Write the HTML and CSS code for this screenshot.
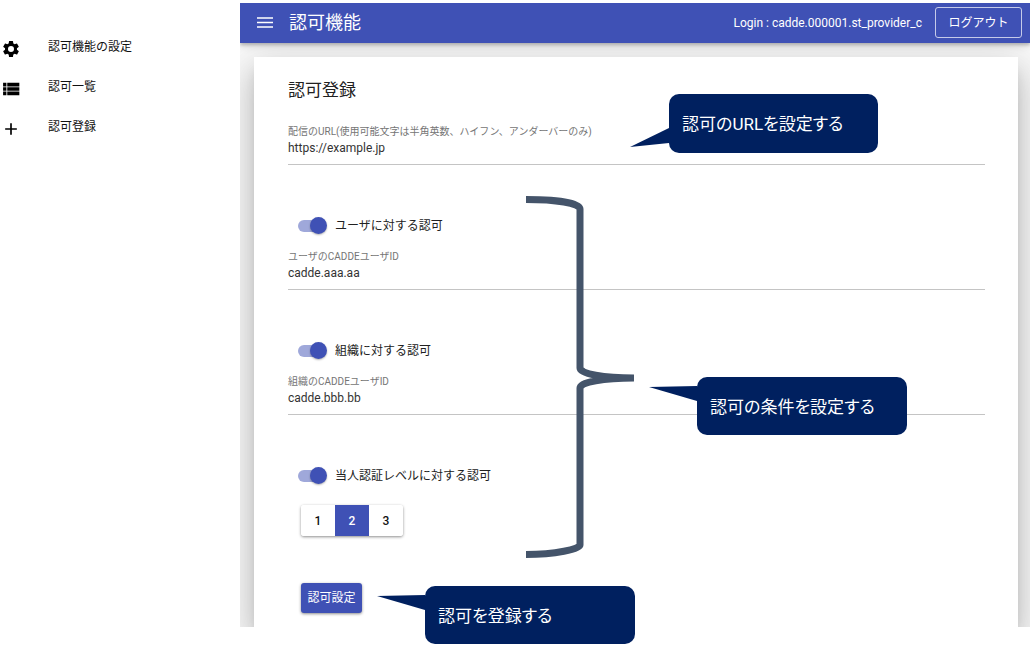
FILE: index.html
```html
<!DOCTYPE html>
<html lang="ja">
<head>
<meta charset="utf-8">
<title>認可機能</title>
<link rel="stylesheet" href="styles.css">
</head>
<body>
<div class="stage">
  <div class="app">
    <nav class="sidebar">
      <a class="nav-item" href="#settings">
        <svg class="icon" viewBox="0 0 24 24"><path d="M19.14 12.94c.04-.3.06-.61.06-.94 0-.32-.02-.64-.07-.94l2.03-1.58a.49.49 0 0 0 .12-.61l-1.92-3.32a.49.49 0 0 0-.59-.22l-2.39.96c-.5-.38-1.03-.7-1.62-.94l-.36-2.54a.48.48 0 0 0-.48-.41h-3.84a.47.47 0 0 0-.47.41l-.36 2.54c-.59.24-1.13.57-1.62.94l-2.39-.96a.48.48 0 0 0-.59.22L2.74 8.87a.48.48 0 0 0 .12.61l2.03 1.58c-.05.3-.09.63-.09.94s.02.64.07.94l-2.03 1.58a.49.49 0 0 0-.12.61l1.92 3.32c.12.22.37.29.59.22l2.39-.96c.5.38 1.03.7 1.62.94l.36 2.54c.05.24.24.41.48.41h3.84c.24 0 .44-.17.47-.41l.36-2.54c.59-.24 1.13-.56 1.62-.94l2.39.96c.22.08.47 0 .59-.22l1.92-3.32a.48.48 0 0 0-.12-.61l-2.01-1.58zM12 15.6a3.6 3.6 0 1 1 0-7.2 3.6 3.6 0 0 1 0 7.2z"/></svg>
        <span>認可機能の設定</span>
      </a>
      <a class="nav-item" href="#list">
        <svg class="icon" viewBox="0 0 24 24"><path d="M2.500 4.500h4v4.500h-4zM7.500 4.500h14.500v4.500h-14.500zM2.500 10h4v4h-4zM7.500 10h14.500v4h-14.500zM2.500 15h4v4.500h-4zM7.500 15h14.500v4.500h-14.500z"/></svg>
        <span>認可一覧</span>
      </a>
      <a class="nav-item" href="#register">
        <svg class="icon" viewBox="0 0 24 24"><path d="M19 13h-6v6h-2v-6H5v-2h6V5h2v6h6z"/></svg>
        <span>認可登録</span>
      </a>
    </nav>
    <div class="main">
      <header class="toolbar">
        <button class="menu" type="button" aria-label="メニュー">
          <svg class="menu-icon" viewBox="0 0 16 12"><path d="M0 .3h16v1.500H0zM0 4.800h16v1.500H0zM0 9.300h16v1.500H0z"/></svg>
        </button>
        <span class="title">認可機能</span>
        <span class="login">Login : cadde.000001.st_provider_c</span>
        <button class="logout" type="button">ログアウト</button>
      </header>
      <form class="card">
        <h1 class="heading">認可登録</h1>
        <div class="field">
          <label for="url">配信のURL(使用可能文字は半角英数、ハイフン、アンダーバーのみ)</label>
          <input id="url" type="text" value="https://example.jp">
        </div>
        <section class="group">
          <label class="toggle"><input type="checkbox" role="switch" checked><span>ユーザに対する認可</span></label>
          <div class="field">
            <label for="user">ユーザのCADDEユーザID</label>
            <input id="user" type="text" value="cadde.aaa.aa">
          </div>
        </section>
        <section class="group">
          <label class="toggle"><input type="checkbox" role="switch" checked><span>組織に対する認可</span></label>
          <div class="field">
            <label for="org">組織のCADDEユーザID</label>
            <input id="org" type="text" value="cadde.bbb.bb">
          </div>
        </section>
        <section class="group">
          <label class="toggle"><input type="checkbox" role="switch" checked><span>当人認証レベルに対する認可</span></label>
          <div class="levels">
            <button type="button">1</button>
            <button type="button" class="selected" aria-pressed="true">2</button>
            <button type="button">3</button>
          </div>
        </section>
        <button class="submit" type="button">認可設定</button>
      </form>
    </div>
  </div>

  <svg class="brace" viewBox="0 0 110 364"><path d="M1 4.500C30 4.500 55 8 55 14V173C55 179 79 183 109 183C79 183 55 187 55 193V350C55 354 30 359.500 1 359.500"/></svg>
  <div class="callout callout-url">
    <svg class="tail" viewBox="0 0 40 20"><path d="M40 0V15L1 19z"/></svg>認可のURLを設定する
  </div>
  <div class="callout callout-condition">
    <svg class="tail" viewBox="0 0 50 16"><path d="M50 0V15L2 1z"/></svg>認可の条件を設定する
  </div>
  <div class="callout callout-submit">
    <svg class="tail" viewBox="0 0 50 16"><path d="M50 0V15L2 1z"/></svg>認可を登録する
  </div>
</div>
</body>
</html>
```
FILE: styles.css
```css
* { box-sizing: border-box; }
body {
  margin: 0;
  background: #fff;
  color: #212121;
  font: 12px/18px Roboto, "Noto Sans CJK JP", sans-serif;
}
button, input { font: inherit; }
.stage { position: relative; padding: 3px 1px 30px 0; }
.app { display: grid; grid-template-columns: 240px 1fr; }

.sidebar { padding-top: 24px; }
.nav-item {
  display: flex;
  align-items: center;
  gap: 27px;
  height: 40px;
  padding-left: 1px;
  color: #111;
  text-decoration: none;
}
.icon { width: 20px; height: 20px; margin-top: 3px; fill: #000; }

.main {
  overflow: hidden;
  background: #fafafa;
}
.toolbar {
  position: relative;
  z-index: 1;
  display: flex;
  align-items: center;
  height: 40px;
  padding: 0 8px 0 17px;
  background: #3f51b5;
  color: #fff;
  box-shadow: 0 2px 3px rgba(0,0,0,.2), 0 3px 8px rgba(0,0,0,.14);
}
.menu { display: flex; padding: 0; border: 0; background: none; }
.menu-icon { width: 16px; height: 12px; fill: #fff; }
.title { margin-left: 16px; font-size: 18px; }
.login { margin-left: auto; }
.logout {
  width: 87px;
  height: 31px;
  margin: 0 0 1px 13px;
  padding: 0;
  border: 1px solid #c5cae9;
  border-radius: 3px;
  background: none;
  color: #fff;
}

.card {
  margin: 14px 12px 0 14px;
  padding: 16px 33px 14px 34px;
  background: #fff;
  box-shadow: 0 9px 12px -6px rgba(0,0,0,.2), 0 19px 30px 2px rgba(0,0,0,.14), 0 7px 37px 6px rgba(0,0,0,.12);
}
.heading { margin: 0 0 17px; font-size: 17px; line-height: 34px; font-weight: 400; }
.field label { display: block; color: #757575; font-size: 10px; line-height: 16px; }
.field input {
  display: block;
  width: 100%;
  height: 25px;
  padding: 0 0 9px;
  border: 0;
  border-bottom: 1px solid #c4c4c4;
  background: none;
  color: #333;
}
.group { margin-top: 45px; }
.toggle { display: flex; align-items: center; gap: 8px; height: 32px; padding-left: 10px; margin-bottom: 7px; }
.toggle input {
  position: relative;
  appearance: none;
  width: 29px;
  height: 12px;
  margin: 0;
  border-radius: 6px;
  background: linear-gradient(#9fa8da, #9fa8da) left / 24px 12px no-repeat;
}
.toggle input::after {
  content: "";
  position: absolute;
  top: -3px;
  right: 0;
  width: 17px;
  height: 17px;
  border-radius: 50%;
  background: #3f51b5;
  box-shadow: 0 1px 2px rgba(0,0,0,.3);
}
.levels {
  display: inline-flex;
  height: 31px;
  margin: 6px 0 0 13px;
  border-radius: 3px;
  box-shadow: 0 1px 3px rgba(0,0,0,.45);
  overflow: hidden;
  vertical-align: top;
}
.levels button { width: 34px; padding: 0; border: 0; background: #fff; color: #111; font-weight: 500; }
.levels .selected { background: #3f51b5; color: #fff; }
.submit {
  display: block;
  width: 61px;
  height: 30px;
  margin: 47px 0 0 13px;
  padding: 0;
  border: 0;
  border-radius: 3px;
  background: #3f51b5;
  color: #fff;
  box-shadow: 0 1px 3px rgba(0,0,0,.45);
}

.brace {
  position: absolute;
  left: 525px;
  top: 195px;
  width: 110px;
  height: 364px;
  fill: none;
  stroke: #44546a;
  stroke-width: 7px;
}
.callout {
  position: absolute;
  width: 210px;
  height: 58px;
  padding: 0 13px;
  border-radius: 10px;
  background: #00205f;
  color: #fff;
  font-size: 17px;
  line-height: 60px;
  font-feature-settings: "palt";
}
.callout-url { left: 669px; top: 94px; width: 209px; height: 59px; }
.callout-condition { left: 697px; top: 377px; }
.callout-submit { left: 425px; top: 586px; }
.tail { position: absolute; top: 9px; right: 100%; width: 50px; height: 16px; fill: #00205f; }
.callout-url .tail { top: 34px; width: 40px; height: 20px; }
```
